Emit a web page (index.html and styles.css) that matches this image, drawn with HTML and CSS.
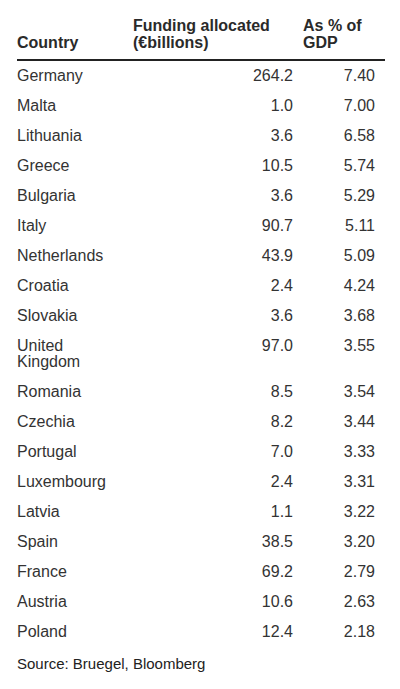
FILE: index.html
```html
<!DOCTYPE html>
<html>
<head>
<meta charset="utf-8">
<link rel="stylesheet" href="styles.css">
</head>
<body>
<div class="wrap">
<table class="data">
<thead>
<tr><th class="c-country">Country</th><th class="c-fund">Funding allocated (€billions)</th><th class="c-gdp">As % of GDP</th></tr>
</thead>
<tbody>
<tr><td>Germany</td><td class="num">264.2</td><td class="num">7.40</td></tr>
<tr><td>Malta</td><td class="num">1.0</td><td class="num">7.00</td></tr>
<tr><td>Lithuania</td><td class="num">3.6</td><td class="num">6.58</td></tr>
<tr><td>Greece</td><td class="num">10.5</td><td class="num">5.74</td></tr>
<tr><td>Bulgaria</td><td class="num">3.6</td><td class="num">5.29</td></tr>
<tr><td>Italy</td><td class="num">90.7</td><td class="num">5.11</td></tr>
<tr><td>Netherlands</td><td class="num">43.9</td><td class="num">5.09</td></tr>
<tr><td>Croatia</td><td class="num">2.4</td><td class="num">4.24</td></tr>
<tr><td>Slovakia</td><td class="num">3.6</td><td class="num">3.68</td></tr>
<tr><td>United Kingdom</td><td class="num">97.0</td><td class="num">3.55</td></tr>
<tr><td>Romania</td><td class="num">8.5</td><td class="num">3.54</td></tr>
<tr><td>Czechia</td><td class="num">8.2</td><td class="num">3.44</td></tr>
<tr><td>Portugal</td><td class="num">7.0</td><td class="num">3.33</td></tr>
<tr><td>Luxembourg</td><td class="num">2.4</td><td class="num">3.31</td></tr>
<tr><td>Latvia</td><td class="num">1.1</td><td class="num">3.22</td></tr>
<tr><td>Spain</td><td class="num">38.5</td><td class="num">3.20</td></tr>
<tr><td>France</td><td class="num">69.2</td><td class="num">2.79</td></tr>
<tr><td>Austria</td><td class="num">10.6</td><td class="num">2.63</td></tr>
<tr><td>Poland</td><td class="num">12.4</td><td class="num">2.18</td></tr>
</tbody>
</table>
<p class="source">Source: Bruegel, Bloomberg</p>
</div>
</body>
</html>
```
FILE: styles.css
```css
html, body {
  margin: 0;
  padding: 0;
  background: #fff;
}
body {
  font-family: "Liberation Sans", Arial, sans-serif;
  color: #333;
}
.wrap {
  padding: 17px 15px 0 17px;
}
.data {
  width: 368px;
  border-collapse: collapse;
  table-layout: fixed;
  font-size: 16px;
  line-height: 16px;
}
.data th {
  text-align: left;
  vertical-align: bottom;
  font-weight: bold;
  line-height: 17px;
  color: #2a2a2a;
  padding: 0 0 8px 0;
  border-bottom: 2px solid #222;
}
.c-country { width: 116px; }
.c-fund { width: 170px; }
.c-gdp { width: 82px; }
.data td {
  padding: 7px 0;
  vertical-align: top;
}
.data td:first-child {
  padding-right: 12px;
}
.data td.num {
  text-align: right;
  padding-right: 10px;
}
.source {
  margin: 8px 0 0 0;
  font-size: 15px;
  line-height: 18px;
  color: #222;
}
```
